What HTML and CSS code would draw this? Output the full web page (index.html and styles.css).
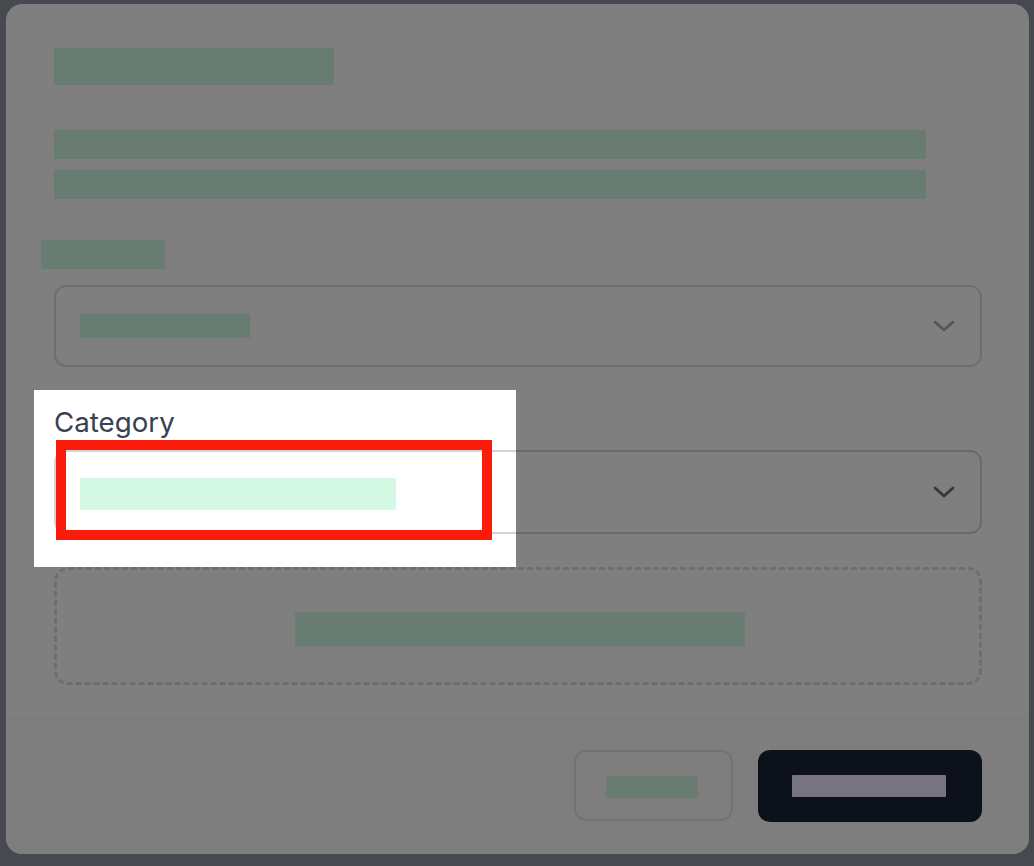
FILE: index.html
```html
<!DOCTYPE html>
<html lang="en">
<head>
<meta charset="utf-8">
<title>Modal</title>
<link rel="stylesheet" href="styles.css">
</head>
<body>
<div class="modal">
  <div class="modal-body">
    <div class="bar title"></div>
    <div class="desc">
      <div class="bar line"></div>
      <div class="bar line"></div>
    </div>
    <div class="field field-1">
      <div class="bar label-bar"></div>
      <div class="select">
        <div class="bar sel-val"></div>
        <svg class="chev chev-1" width="22" height="14" viewBox="0 0 22 14"><polyline points="2,3 11,11 20,3" fill="none" stroke="currentColor" stroke-width="2.6" stroke-linecap="round" stroke-linejoin="round"/></svg>
      </div>
    </div>
    <div class="field field-2">
      <label class="label">Category</label>
      <div class="select select-2">
        <div class="bar sel-val-2"></div>
        <svg class="chev chev-2" width="22" height="14" viewBox="0 0 22 14"><polyline points="2,3 11,11 20,3" fill="none" stroke="currentColor" stroke-width="2.8" stroke-linecap="round" stroke-linejoin="round"/></svg>
      </div>
    </div>
    <div class="dropzone">
      <div class="bar drop-text"></div>
    </div>
  </div>
  <div class="modal-footer">
    <button class="btn btn-cancel"><span class="bar btn-label"></span></button>
    <button class="btn btn-primary"><span class="btn-label-primary"></span></button>
  </div>
</div>
<div class="spotlight"></div>
<div class="focus-ring"></div>
</body>
</html>
```

FILE: styles.css
```css
html, body {
  margin: 0;
  height: 100%;
}
body {
  background: #8d939e;
  padding: 4px 5px 12px 6px;
  box-sizing: border-box;
  font-family: Inter, "Liberation Sans", sans-serif;
  overflow: hidden;
}
.modal {
  width: 1023px;
  height: 850px;
  background: #ffffff;
  border-radius: 16px;
  display: flex;
  flex-direction: column;
  overflow: hidden;
}
.modal-body {
  padding: 44px 47px 33px 48px;
  display: flex;
  flex-direction: column;
}
.bar {
  background: #d3f9e5;
  border-radius: 1px;
}
.title {
  width: 280px;
  height: 37px;
  margin-bottom: 45px;
}
.desc {
  display: flex;
  flex-direction: column;
  gap: 11px;
  margin-bottom: 41px;
}
.line {
  width: 872px;
  height: 29px;
}
.field {
  display: flex;
  flex-direction: column;
}
.field-1 {
  gap: 16px;
}
.label-bar {
  width: 124px;
  height: 29px;
  margin-left: -13px;
}
.select {
  height: 82px;
  box-sizing: border-box;
  border: 2px solid #dcdcdc;
  border-radius: 12px;
  display: flex;
  align-items: center;
  justify-content: space-between;
  padding: 0 25px 0 24px;
}
.sel-val {
  width: 170px;
  height: 24px;
}
.chev-1 {
  color: #aaaab4;
}
.field-2 {
  margin-top: 37px;
  gap: 10px;
}
.label {
  font-size: 27.7px;
  line-height: 36px;
  height: 36px;
  color: #374151;
  font-weight: 400;
}
.select-2 {
  height: 84px;
  border-color: #d1d5db;
}
.sel-val-2 {
  width: 316px;
  height: 32px;
  margin-top: 4px;
}
.chev-2 {
  color: #6c6d77;
}
.dropzone {
  margin-top: 33px;
  height: 118px;
  box-sizing: border-box;
  border: 3px dashed #dcdde0;
  border-radius: 14px;
  display: flex;
  align-items: center;
  justify-content: center;
  padding-top: 6px;
}
.drop-text {
  width: 450px;
  height: 34px;
  margin-left: 3px;
}
.modal-footer {
  flex: 1;
  background: #fbfcfb;
  border-top: 1px solid #f6f7f6;
  padding: 31px 47px 32px 0;
  display: flex;
  justify-content: flex-end;
  align-items: flex-start;
  gap: 25px;
}
.btn {
  height: 72px;
  box-sizing: border-box;
  border-radius: 12px;
  display: flex;
  align-items: center;
  justify-content: flex-start;
  padding: 0;
  font: inherit;
}
.btn-cancel {
  width: 159px;
  height: 71px;
  background: transparent;
  border: 2px solid #e6e5eb;
  padding-left: 30px;
}
.btn-label {
  display: block;
  width: 92px;
  height: 22px;
  margin-top: 3px;
}
.btn-primary {
  width: 224px;
  background: #1a2434;
  border: none;
  padding-left: 34px;
}
.btn-label-primary {
  display: block;
  width: 154px;
  height: 22px;
  background: #eee8fe;
  border-radius: 1px;
}
.spotlight {
  position: absolute;
  left: 34px;
  top: 390px;
  width: 482px;
  height: 177px;
  box-shadow: 0 0 0 3000px rgba(0, 0, 0, 0.5);
  z-index: 5;
}
.focus-ring {
  position: absolute;
  left: 56px;
  top: 440px;
  width: 436px;
  height: 100px;
  box-sizing: border-box;
  border: 10px solid #fa1b0b;
  z-index: 6;
}
```
